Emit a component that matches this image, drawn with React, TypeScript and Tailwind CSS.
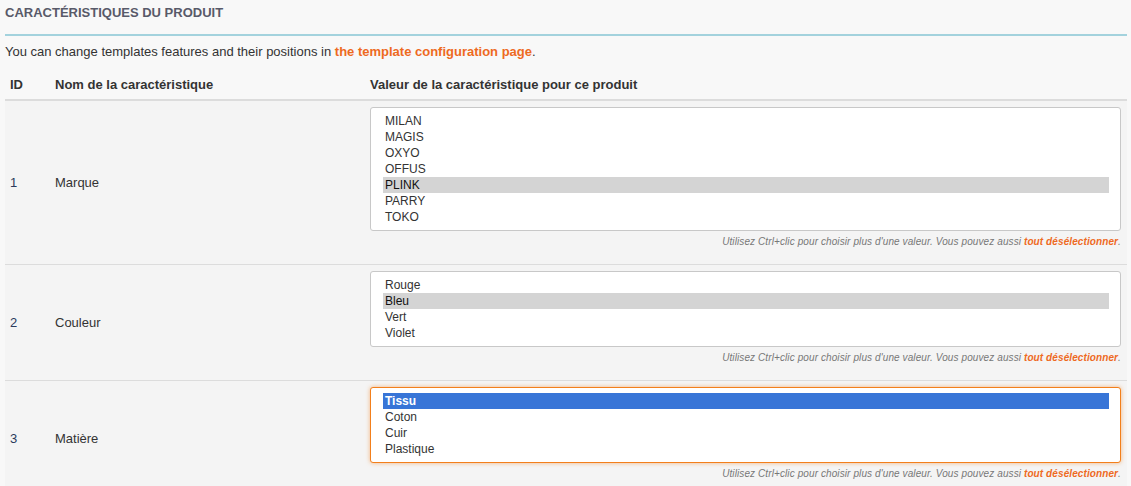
import React from "react";

type Opt = { label: string; state?: "gray" | "blue" };
type Row = { id: string; name: string; options: Opt[]; focused?: boolean };

const rows: Row[] = [
  {
    id: "1",
    name: "Marque",
    options: [
      { label: "MILAN" },
      { label: "MAGIS" },
      { label: "OXYO" },
      { label: "OFFUS" },
      { label: "PLINK", state: "gray" },
      { label: "PARRY" },
      { label: "TOKO" },
    ],
  },
  {
    id: "2",
    name: "Couleur",
    options: [
      { label: "Rouge" },
      { label: "Bleu", state: "gray" },
      { label: "Vert" },
      { label: "Violet" },
    ],
  },
  {
    id: "3",
    name: "Matière",
    focused: true,
    options: [
      { label: "Tissu", state: "blue" },
      { label: "Coton" },
      { label: "Cuir" },
      { label: "Plastique" },
    ],
  },
];

function OptionItem({ o }: { o: Opt }) {
  if (o.state === "gray") {
    return <div className="h-[16px] leading-[16px] pl-[2px] bg-[#d4d4d4] text-[#111]">{o.label}</div>;
  }
  if (o.state === "blue") {
    return <div className="h-[16px] leading-[16px] pl-[2px] bg-[#3875d7] text-white font-bold">{o.label}</div>;
  }
  return <div className="h-[16px] leading-[16px] pl-[2px] text-[#333]">{o.label}</div>;
}

export default function App() {
  return (
    <div className="w-[1131px] h-[486px] overflow-hidden bg-[#f8f8f8] text-[13px] text-[#333] font-['Liberation_Sans',Arial,sans-serif]">
      <div className="pl-[5px] pr-[4px]">
        <div className="h-[36px] pt-[6px] border-b-2 border-[#a3d2dd] font-bold leading-[14px] text-[#585a69] uppercase">
          CARACTÉRISTIQUES DU PRODUIT
        </div>
        <p className="mt-[9px] leading-[14px]">
          You can change templates features and their positions in{" "}
          <span className="font-bold text-[#ee6a1f]">the template configuration page</span>.
        </p>
        <div className="mt-[12px] bg-[#f4f4f4]">
          <div className="grid grid-cols-[50px_315px_1fr] h-[30px] items-center border-b-2 border-[#dcdcdc] font-bold bg-[#f8f8f8] pr-[6px]">
            <div className="pl-[5px]">ID</div>
            <div>Nom de la caractéristique</div>
            <div>Valeur de la caractéristique pour ce produit</div>
          </div>
          {rows.map((r) => (
            <div
              key={r.id}
              className="grid grid-cols-[50px_315px_1fr] border-b border-[#dcdcdc] pr-[6px]"
            >
              <div className="pl-[5px] flex items-center text-[#2b3a5c]">{r.id}</div>
              <div className="flex items-center">{r.name}</div>
              <div className="pt-[6px] pb-[16px]">
                <div
                  className={
                    r.focused
                      ? "bg-white border border-[#f27f1b] rounded-[3px] py-[5px] pl-[12px] pr-[11px] text-[12px] shadow-[0_0_4px_rgba(242,127,27,0.55)]"
                      : "bg-white border border-[#c8c8c8] rounded-[3px] py-[5px] pl-[12px] pr-[11px] text-[12px]"
                  }
                >
                  {r.options.map((o) => (
                    <OptionItem key={o.label} o={o} />
                  ))}
                </div>
                <div className="mt-[5px] h-[12px] leading-[12px] text-right text-[10px] tracking-[0.1px] italic text-[#777]">
                  Utilisez Ctrl+clic pour choisir plus d'une valeur. Vous pouvez aussi{" "}
                  <span className="font-bold text-[#ee6a1f]">tout désélectionner</span>.
                </div>
              </div>
            </div>
          ))}
        </div>
      </div>
    </div>
  );
}
